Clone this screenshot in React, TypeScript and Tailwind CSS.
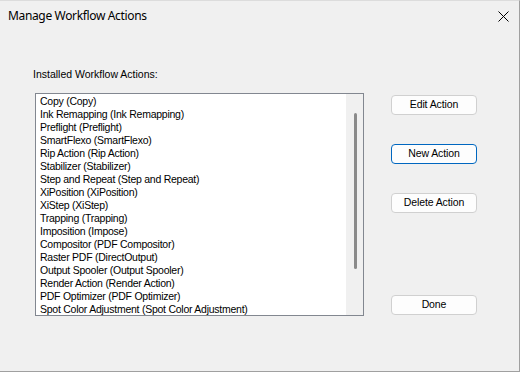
import React from "react";

const items = [
  "Copy (Copy)",
  "Ink Remapping (Ink Remapping)",
  "Preflight (Preflight)",
  "SmartFlexo (SmartFlexo)",
  "Rip Action (Rip Action)",
  "Stabilizer (Stabilizer)",
  "Step and Repeat (Step and Repeat)",
  "XiPosition (XiPosition)",
  "XiStep (XiStep)",
  "Trapping (Trapping)",
  "Imposition (Impose)",
  "Compositor (PDF Compositor)",
  "Raster PDF (DirectOutput)",
  "Output Spooler (Output Spooler)",
  "Render Action (Render Action)",
  "PDF Optimizer (PDF Optimizer)",
  "Spot Color Adjustment (Spot Color Adjustment)",
];

function Btn({ label, focused, className }: { label: string; focused?: boolean; className?: string }) {
  return (
    <div
      className={
        "w-[86px] h-[20px] flex items-center justify-center rounded-[4px] bg-[#fdfdfd] text-[10.5px] tracking-[-0.1px] text-black border " +
        (focused ? "border-[#0067c0]" : "border-[#d0d0d0]") +
        " " +
        (className ?? "")
      }
    >
      {label}
    </div>
  );
}

export default function App() {
  return (
    <div className="w-[522px] h-[373px] bg-white" style={{ fontFamily: '"Liberation Sans", Arial, sans-serif' }}>
      <div className="w-[520px] h-[372px] bg-[#f0f0f0] border-r border-b border-t border-t-[#dcdcdc] border-r-[#a0a0a0] border-b-[#a0a0a0] flex flex-col">
        <div className="h-[30px] flex items-center justify-between pl-[8px] pr-[10px]">
          <span
            className="text-[12px] tracking-[-0.35px] text-black"
            style={{ fontFamily: '"Segoe UI", "Noto Sans", sans-serif' }}
          >
            Manage Workflow Actions
          </span>
          <svg width="11" height="11" viewBox="0 0 11 11" className="mt-[1px]">
            <path d="M0.5 0.5 L10.5 10.5 M10.5 0.5 L0.5 10.5" stroke="#000" strokeWidth="1" fill="none" />
          </svg>
        </div>
        <div className="flex flex-row">
          <div className="flex flex-col pl-[33px] pt-[37px]">
            <div className="text-[10.5px] leading-[13px] text-black">Installed Workflow Actions:</div>
            <div className="ml-[2px] mt-[12px] w-[329px] h-[223px] bg-white border border-[#828790] flex flex-row overflow-hidden">
              <div className="flex-1 pl-[4px] pt-[1px] overflow-hidden">
                {items.map((t) => (
                  <div key={t} className="text-[10.5px] tracking-[-0.25px] leading-[13px] text-black whitespace-nowrap">
                    {t}
                  </div>
                ))}
              </div>
              <div className="w-[17px] h-full bg-[#f0f0f0] flex justify-center pt-[19px]">
                <div className="w-[3px] h-[156px] bg-[#8a8a8a] rounded-[2px] ml-[1px]" />
              </div>
            </div>
          </div>
          <div className="flex flex-col ml-[27px] pt-[64px]">
            <Btn label="Edit Action" />
            <Btn label="New Action" focused className="mt-[29px]" />
            <Btn label="Delete Action" className="mt-[29px]" />
            <Btn label="Done" className="mt-[82px]" />
          </div>
        </div>
      </div>
    </div>
  );
}
